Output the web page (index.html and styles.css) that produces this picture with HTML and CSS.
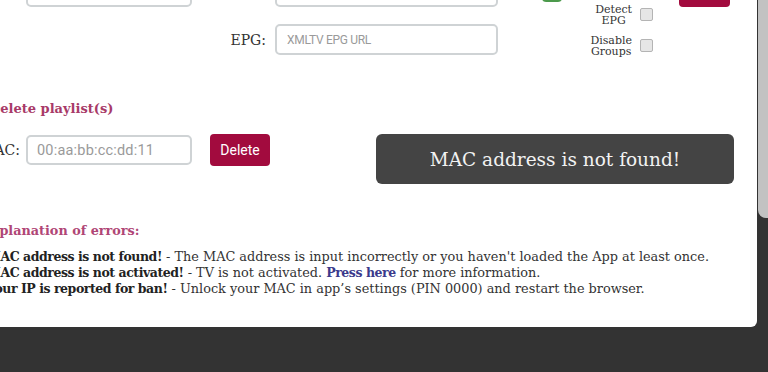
FILE: index.html
```html
<!DOCTYPE html>
<html lang="en">
<head>
<meta charset="utf-8">
<title>Playlist manager</title>
<link rel="stylesheet" href="styles.css">
</head>
<body>
<div class="scrollbar"></div>
<main class="card">
  <section class="add-form">
    <div class="fields">
      <label class="lbl">MAC:</label>
      <input class="inp" type="text">
      <label class="lbl lbl-b">URL:</label>
      <input class="inp" type="text">
      <span></span>
      <span></span>
      <label class="lbl lbl-b">EPG:</label>
      <input class="inp inp-small" type="text" placeholder="XMLTV EPG URL">
    </div>
    <div class="green-col"><button class="btn-green" type="button"></button></div>
    <div class="options">
      <label class="opt"><span class="opt-text">Detect<br>EPG</span><input class="chk" type="checkbox"></label>
      <label class="opt"><span class="opt-text">Disable<br>Groups</span><input class="chk" type="checkbox"></label>
    </div>
    <div class="red-col"><button class="btn-red" type="button"></button></div>
  </section>

  <h2 class="heading heading-del">Delete playlist(s)</h2>
  <section class="del-row">
    <div class="del-form">
      <label class="lbl">MAC:</label>
      <input class="inp inp-mac" type="text" placeholder="00:aa:bb:cc:dd:11">
      <button class="btn-delete" type="button">Delete</button>
    </div>
    <div class="message">MAC address is not found!</div>
  </section>

  <h2 class="heading heading-exp">Explanation of errors:</h2>
  <div class="errors">
    <p class="err err-1"><b>MAC address is not found!</b> - The MAC address is input incorrectly or you haven't loaded the App at least once.</p>
    <p class="err err-2"><b>MAC address is not activated!</b> - TV is not activated. <a class="link" href="#">Press here</a> for more information.</p>
    <p class="err err-3"><b>Your IP is reported for ban!</b> - Unlock your MAC in app’s settings (PIN 0000) and restart the browser.</p>
  </div>
</main>
</body>
</html>
```

FILE: styles.css
```css
html, body {
  margin: 0;
  padding: 0;
}
body {
  width: 768px;
  height: 372px;
  overflow: hidden;
  background: #333333;
  font-family: "DejaVu Serif", serif;
  color: #333;
  position: relative;
}
.scrollbar {
  position: absolute;
  top: 0;
  right: 0;
  width: 10px;
  height: 218px;
  background: #c2c2c2;
  border-bottom-left-radius: 8px;
}
.card {
  background: #ffffff;
  margin: -24px 11px 0 -30px;
  padding: 0 0 30.5px 10px;
  border-radius: 0 0 6px 6px;
}
.add-form {
  display: flex;
  align-items: flex-start;
}
.fields {
  display: grid;
  grid-template-columns: 40px 166px 71px 223px;
  grid-auto-rows: 31px;
  column-gap: 6px;
  row-gap: 17px;
  align-items: center;
}
.lbl {
  font-size: 14px;
  text-align: right;
  white-space: nowrap;
  color: #333;
}
.lbl-b {
  padding-right: 3px;
}
.inp {
  box-sizing: border-box;
  width: 100%;
  height: 31px;
  border: 2px solid #cfd3d5;
  border-radius: 5px;
  padding: 0 10px;
  font-family: Roboto, sans-serif;
  font-size: 14px;
  color: #333;
  background: #fff;
  outline: none;
}
.inp::placeholder {
  color: #9a9a9a;
}
.inp-small {
  font-size: 12px;
  letter-spacing: -0.3px;
}
.green-col {
  margin-left: 44px;
}
.btn-green {
  display: block;
  width: 20px;
  height: 26px;
  border: none;
  border-radius: 4px;
  background: #4c9a4c;
  padding: 0;
}
.options {
  width: 91px;
  padding-top: 27.5px;
  display: flex;
  flex-direction: column;
  align-items: flex-end;
  gap: 9px;
}
.opt {
  display: flex;
  align-items: center;
  height: 22px;
}
.opt-text {
  font-size: 11px;
  line-height: 11px;
  text-align: center;
  color: #333;
}
.chk {
  appearance: none;
  -webkit-appearance: none;
  box-sizing: border-box;
  width: 13px;
  height: 13px;
  margin: 0 0 0 8px;
  border: 1px solid #b4b4b4;
  border-radius: 2px;
  background: #e6e6e6;
}
.red-col {
  margin-left: 26px;
}
.btn-red {
  display: block;
  width: 51px;
  height: 31px;
  border: none;
  border-radius: 4px;
  background: #a20b3e;
  padding: 0;
}
.heading {
  margin: 0;
  font-size: 13px;
  line-height: 16px;
  font-weight: bold;
  color: #a83a68;
}
.heading-del {
  margin-top: 44px;
  padding-left: 9px;
}
.heading-exp {
  margin-top: 38.5px;
  padding-left: 2px;
  font-size: 12.8px;
  color: #b04676;
}
.del-row {
  display: flex;
  align-items: flex-start;
  margin-top: 17.5px;
}
.del-form {
  display: flex;
  align-items: center;
  height: 32px;
}
.del-form .lbl {
  width: 40px;
  margin-right: 6px;
}
.inp-mac {
  width: 166px;
  height: 30px;
  padding: 0 9px;
  font-size: 14.5px;
  letter-spacing: 0.2px;
}
.btn-delete {
  margin-left: 18px;
  width: 60px;
  height: 32px;
  border: none;
  border-radius: 4px;
  background: #a20b3e;
  color: #fff;
  font-family: Roboto, sans-serif;
  font-size: 14px;
  padding: 0;
}
.message {
  margin-left: 106px;
  width: 358px;
  height: 50px;
  border-radius: 6px;
  background: #444444;
  color: #f2f2f2;
  font-size: 18.5px;
  display: flex;
  align-items: center;
  justify-content: center;
}
.errors {
  margin-top: 10px;
  padding-left: 7px;
}
.err {
  margin: 0;
  font-size: 12.85px;
  line-height: 16px;
  white-space: nowrap;
  color: #333;
}
.err b {
  color: #222;
  font-size: 12.5px;
  letter-spacing: -0.45px;
}
.link {
  color: #3b3a8c;
  font-weight: bold;
  font-size: 12.5px;
  letter-spacing: -0.45px;
  text-decoration: none;
}
```
